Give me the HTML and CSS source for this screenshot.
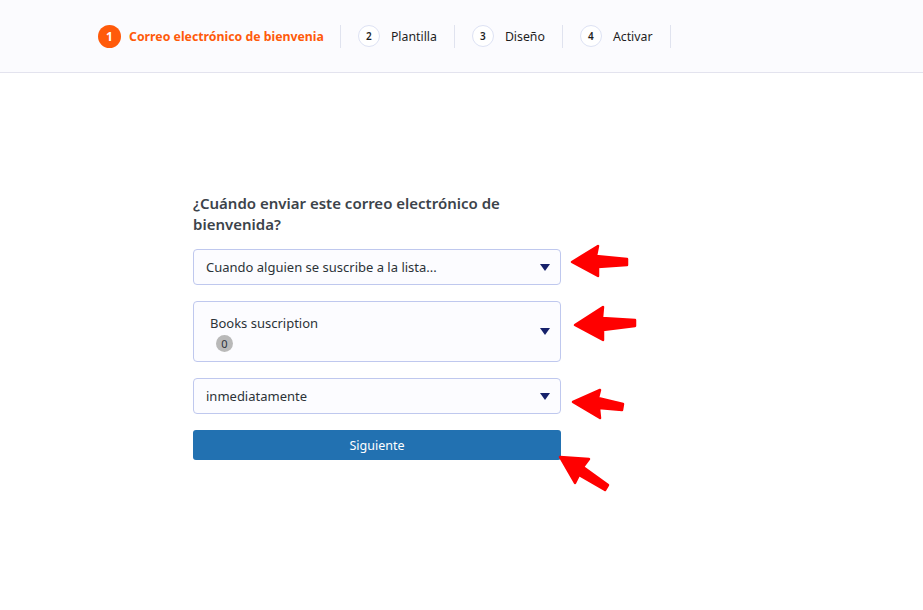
FILE: index.html
```html
<!DOCTYPE html>
<html lang="es">
<head>
    <meta charset="UTF-8" />
    <meta name="viewport" content="width=device-width, initial-scale=1.0" />
    <title>Correo de bienvenida</title>
    <link rel="stylesheet" href="styles.css">
</head>
<body>
    <!-- Wizard steps -->
    <header class="steps">
        <div class="step current">
            <span class="step-num">1</span>
            <span class="step-label">Correo electrónico de bienvenia</span>
        </div>
        <div class="step">
            <span class="step-num">2</span>
            <span class="step-label">Plantilla</span>
        </div>
        <div class="step">
            <span class="step-num">3</span>
            <span class="step-label">Diseño</span>
        </div>
        <div class="step">
            <span class="step-num">4</span>
            <span class="step-label">Activar</span>
        </div>
    </header>

    <main class="wizard-body">
        <form class="welcome-form">
            <h2>¿Cuándo enviar este correo electrónico de bienvenida?</h2>

            <div class="select">
                <span class="select-text">Cuando alguien se suscribe a la lista...</span>
                <span class="caret"></span>
            </div>

            <div class="select select-list">
                <div class="list-info">
                    <span class="list-name">Books suscription</span>
                    <span class="count">0</span>
                </div>
                <span class="caret"></span>
            </div>

            <div class="select">
                <span class="select-text">inmediatamente</span>
                <span class="caret"></span>
            </div>

            <button type="button" class="btn-next">Siguiente</button>
        </form>
    </main>

    <!-- red annotation arrows drawn over the page -->
    <svg class="marks" width="923" height="610" viewBox="0 0 923 610">
        <g fill="#ff0000" stroke="#ff0000" stroke-width="2.5" stroke-linejoin="round">
            <polygon points="572,262 598,246 596,256 627,259 627,265 598,267 598,276" />
            <polygon points="575,325 603,307 602,318 635,320 635,326 603,330 603,340" />
            <polygon points="573,402 600,390 598,398 623,404 622,410 599,408 600,418" />
            <polygon points="560,457 589,459 583,467 608,485 605,490 579,475 575,483" />
        </g>
    </svg>
</body>
</html>
```

FILE: styles.css
```css
/* --- Reset --- */
* {
    margin: 0;
    padding: 0;
    box-sizing: border-box;
}

body {
    font-family: "Noto Sans", "Open Sans", Arial, sans-serif;
    color: #3c434a;
    background: #fff;
    min-height: 610px;
    position: relative;
}

/* --- Steps header --- */
.steps {
    display: flex;
    align-items: center;
    height: 73px;
    padding-left: 98px;
    background: #fbfbfe;
    border-bottom: 1px solid #e3e3ee;
}

.step {
    display: flex;
    align-items: center;
    gap: 11px;
    height: 23px;
    padding: 0 17px 0 17px;
    border-right: 1px solid #e0e3ef;
}

.step.current {
    gap: 10px;
    padding-left: 0;
    padding-right: 16px;
}

.step-num {
    width: 22px;
    height: 22px;
    border-radius: 50%;
    border: 1px solid #dde2f4;
    background: #fff;
    color: #1e1e1e;
    font-size: 10px;
    font-weight: 600;
    display: flex;
    align-items: center;
    justify-content: center;
}

.step-label {
    font-size: 12.3px;
    color: #1e1e1e;
}

.step.current .step-num {
    width: 23px;
    height: 23px;
    border: none;
    background: #ff5a0a;
    color: #fff;
    font-size: 12px;
    font-weight: 700;
}

.step.current .step-label {
    color: #ff5a0a;
    font-weight: 700;
    margin-left: -2px;
}

/* --- Form --- */
.wizard-body {
    padding: 120px 0 0 193px;
}

.welcome-form {
    width: 368px;
    display: flex;
    flex-direction: column;
    gap: 16px;
}

.welcome-form h2 {
    font-size: 15px;
    font-weight: 600;
    line-height: 21px;
    color: #3c434a;
    margin-bottom: -2px;
    padding-right: 40px;
}

.select {
    display: flex;
    align-items: center;
    justify-content: space-between;
    height: 36px;
    padding: 0 10px 0 12px;
    background: #fcfcff;
    border: 1px solid #bfc8ee;
    border-radius: 4px;
    font-size: 13px;
    color: #2c3338;
}

.select-list {
    height: 61px;
    padding-left: 16px;
}

.list-info {
    display: flex;
    flex-direction: column;
    align-items: flex-start;
    gap: 3px;
    padding-top: 3px;
}

.count {
    width: 17px;
    height: 17px;
    margin-left: 6px;
    border-radius: 50%;
    background: #b9b9b9;
    color: #2c3338;
    font-size: 11px;
    display: flex;
    align-items: center;
    justify-content: center;
}

.caret {
    width: 0;
    height: 0;
    border-left: 5.5px solid transparent;
    border-right: 5.5px solid transparent;
    border-top: 7px solid #16216b;
}

.btn-next {
    height: 30px;
    border: none;
    border-radius: 3px;
    background: #2271b1;
    color: #fff;
    font-family: inherit;
    font-size: 12.5px;
    cursor: pointer;
}

/* --- Annotation overlay --- */
.marks {
    position: absolute;
    left: 0;
    top: 0;
    pointer-events: none;
}
```
